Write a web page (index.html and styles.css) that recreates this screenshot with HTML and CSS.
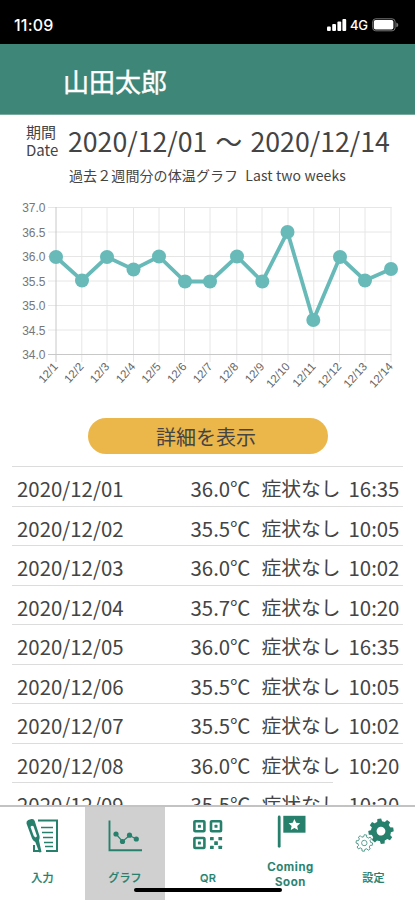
FILE: index.html
```html
<!DOCTYPE html>
<html lang="ja">
<head>
<meta charset="utf-8">
<meta name="viewport" content="width=device-width, initial-scale=1">
<title>体温グラフ</title>
<link rel="stylesheet" href="styles.css">
</head>
<body>
<div class="app">
  <div class="status">
    <span class="clock">11:09</span>
    <div class="signals">
      <svg class="bars" width="20" height="14" viewBox="0 0 20 14" fill="#fff"><rect x="0" y="8.5" width="3.8" height="4.5" rx="1"/><rect x="5.2" y="6" width="3.8" height="7" rx="1"/><rect x="10.4" y="3.5" width="3.8" height="9.5" rx="1"/><rect x="15.4" y="1" width="3.8" height="12" rx="1"/></svg>
      <span class="network">4G</span>
      <svg width="27" height="14" viewBox="0 0 27 14"><rect x=".7" y=".8" width="22.4" height="12" rx="3" fill="none" stroke="#777"/><rect x="1.8" y="2" width="19.6" height="9.6" rx="1.8" fill="#fff"/><path d="M24.3 4.5q2 .7 2 2.4t-2 2.4z" fill="#777"/></svg>
    </div>
  </div>
  <header class="header">山田太郎</header>
  <main class="main">
    <section class="period">
      <div class="period-label"><span>期間</span><span>Date</span></div>
      <div class="period-range">2020/12/01 ～ 2020/12/14</div>
    </section>
    <p class="caption">過去２週間分の体温グラフ&ensp;Last two weeks</p>
    <svg class="chart" width="415" height="206" viewBox="0 194 415 206">
      <path class="grid" d="M48 207.5H391.5M48 232H391.5M48 256.5H391.5M48 281H391.5M48 305.5H391.5M48 330H391.5M81.8 207V362M107 207V362M133.5 207V362M159 207V362M184.5 207V362M210 207V362M236.8 207V362M262 207V362M288 207V362M313.8 207V362M339.5 207V362M365 207V362M391 207V362"/>
      <path class="axis" d="M56 207V362M48 354.5H391.5"/>
      <g class="y-labels"><text x="45.5" y="212">37.0</text><text x="45.5" y="236.5">36.5</text><text x="45.5" y="261">36.0</text><text x="45.5" y="285.5">35.5</text><text x="45.5" y="310">35.0</text><text x="45.5" y="334.5">34.5</text><text x="45.5" y="359">34.0</text></g>
      <polyline class="series" points="56,257 82,280.5 107,257 133.5,269.5 159,256.5 185,281.5 210,281.5 237,256.5 262.3,281.5 287.5,232 313.3,320 340,257 365,280.5 391,269"/>
      <g class="points"><circle cx="56" cy="257" r="7"/><circle cx="82" cy="280.5" r="7"/><circle cx="107" cy="257" r="7"/><circle cx="133.5" cy="269.5" r="7"/><circle cx="159" cy="256.5" r="7"/><circle cx="185" cy="281.5" r="7"/><circle cx="210" cy="281.5" r="7"/><circle cx="237" cy="256.5" r="7"/><circle cx="262.3" cy="281.5" r="7"/><circle cx="287.5" cy="232" r="7"/><circle cx="313.3" cy="320" r="7"/><circle cx="340" cy="257" r="7"/><circle cx="365" cy="280.5" r="7"/><circle cx="391" cy="269" r="7"/></g>
      <g class="x-labels">
        <text transform="translate(58.5 367)rotate(-48)">12/1</text><text transform="translate(84.3 367)rotate(-48)">12/2</text><text transform="translate(110 367)rotate(-48)">12/3</text><text transform="translate(136 367)rotate(-48)">12/4</text><text transform="translate(161.5 367)rotate(-48)">12/5</text><text transform="translate(187.2 367)rotate(-48)">12/6</text><text transform="translate(213 367)rotate(-48)">12/7</text><text transform="translate(239 367)rotate(-48)">12/8</text><text transform="translate(265 367)rotate(-48)">12/9</text><text transform="translate(290.5 367)rotate(-48)">12/10</text><text transform="translate(316.3 367)rotate(-48)">12/11</text><text transform="translate(342 367)rotate(-48)">12/12</text><text transform="translate(367.8 367)rotate(-48)">12/13</text><text transform="translate(393.5 367)rotate(-48)">12/14</text>
      </g>
    </svg>
    <button class="details">詳細を表示</button>
    <div class="records">
      <div class="row"><span>2020/12/01</span><span>36.0℃</span><span class="symptom">症状なし</span><span>16:35</span></div>
      <div class="row"><span>2020/12/02</span><span>35.5℃</span><span class="symptom">症状なし</span><span>10:05</span></div>
      <div class="row"><span>2020/12/03</span><span>36.0℃</span><span class="symptom">症状なし</span><span>10:02</span></div>
      <div class="row"><span>2020/12/04</span><span>35.7℃</span><span class="symptom">症状なし</span><span>10:20</span></div>
      <div class="row"><span>2020/12/05</span><span>36.0℃</span><span class="symptom">症状なし</span><span>16:35</span></div>
      <div class="row"><span>2020/12/06</span><span>35.5℃</span><span class="symptom">症状なし</span><span>10:05</span></div>
      <div class="row"><span>2020/12/07</span><span>35.5℃</span><span class="symptom">症状なし</span><span>10:02</span></div>
      <div class="row"><span>2020/12/08</span><span>36.0℃</span><span class="symptom">症状なし</span><span>10:20</span></div>
      <div class="row row-last"><span>2020/12/09</span><span>35.5℃</span><span class="symptom">症状なし</span><span>10:20</span></div>
    </div>
  </main>
  <nav class="tabs">
    <div class="tab">
      <svg width="34" height="36" viewBox="0 0 34 36"><path d="M12 2.5H31V33H20M8 27V33H13" fill="none" stroke="#26806c" stroke-width="2"/><path d="M15 9.5H27M16 14.5H27M17 19.5H27M18 24.5H27M19 28.5H27" stroke="#26806c" stroke-width="1.7"/><path d="M.5 5.5Q0 3 2.2 2L5.5 1Q8 .6 8.7 3L13.5 18Q14 20 13 22.5L15.5 34L13.3 34.5L9.3 24Q7 22.5 6 20.5Z" fill="#26806c"/><path d="M4.5 9Q5.5 7 7.5 8.2L11 18.2L9.5 19.5L7.8 18Z" fill="#fff"/></svg>
      <span class="tab-label">入力</span>
    </div>
    <div class="tab tab-active">
      <svg width="34" height="36" viewBox="0 0 34 36"><path d="M1.5 2.5V32.2H34" fill="none" stroke="#26806c" stroke-width="1.9"/><path d="M8 16L14.5 23.5L21.5 17.5L28.3 21" fill="none" stroke="#26806c" stroke-width="1.2"/><g fill="#26806c"><circle cx="8" cy="16" r="2.6"/><circle cx="14.5" cy="23.5" r="2.6"/><circle cx="21.5" cy="17.2" r="2.6"/><circle cx="28.3" cy="21" r="2.6"/></g></svg>
      <span class="tab-label">グラフ</span>
    </div>
    <div class="tab tab-qr">
      <svg width="34" height="36" viewBox="0 0 34 36"><g fill="none" stroke="#26806c" stroke-width="2.6"><rect x="3.4" y="3.3" width="10" height="10" rx=".8"/><rect x="20" y="3.3" width="10" height="10" rx=".8"/><rect x="3.4" y="20" width="10" height="10" rx=".8"/></g><g fill="#26806c"><rect x="6.9" y="6.8" width="3" height="3" rx=".6"/><rect x="23.5" y="6.8" width="3" height="3" rx=".6"/><rect x="6.9" y="23.5" width="3" height="3" rx=".6"/><rect x="19" y="19" width="3.7" height="3.3" rx=".5"/><rect x="27.4" y="19" width="3.7" height="3.3" rx=".5"/><rect x="23.2" y="23.2" width="3.7" height="3.7" rx=".5"/><rect x="19" y="27.7" width="3.7" height="3.3" rx=".5"/><rect x="27.4" y="27.7" width="3.7" height="3.3" rx=".5"/></g></svg>
      <span class="tab-label">QR</span>
    </div>
    <div class="tab tab-soon">
      <svg width="34" height="36" viewBox="0 0 34 36"><path d="M5.2 2V31.3" stroke="#26806c" stroke-width="2.8" stroke-linecap="round"/><path d="M9.3 .8H31.5V17.7H9.3Z" fill="#26806c"/><path d="M20.4 4L22.1 7.7L26.2 8.2L23.2 11L24 15L20.4 13L16.8 15L17.6 11L14.6 8.2L18.7 7.7Z" fill="#fff"/></svg>
      <span class="tab-label">Coming<br>Soon</span>
    </div>
    <div class="tab">
      <svg class="gears" width="40" height="36" viewBox="0 0 40 36"><g transform="translate(27 13.2) rotate(-8)"><circle r="7.2" fill="none" stroke="#26806c" stroke-width="5.6"/><path id="teeth" d="M-2.7-8.5L-1.9-12.6H1.9L2.7-8.5Z" fill="#26806c"/><use href="#teeth" transform="rotate(45)"/><use href="#teeth" transform="rotate(90)"/><use href="#teeth" transform="rotate(135)"/><use href="#teeth" transform="rotate(180)"/><use href="#teeth" transform="rotate(225)"/><use href="#teeth" transform="rotate(270)"/><use href="#teeth" transform="rotate(315)"/></g><g transform="translate(10.3 25) rotate(8)" fill="none" stroke="#26806c" stroke-width=".7"><circle r="2.7"/><path id="notch" d="M-2.5-5.8L-1.5-6.1L-1.2-8.2H1.2L1.5-6.1L2.5-5.8"/><use href="#notch" transform="rotate(45)"/><use href="#notch" transform="rotate(90)"/><use href="#notch" transform="rotate(135)"/><use href="#notch" transform="rotate(180)"/><use href="#notch" transform="rotate(225)"/><use href="#notch" transform="rotate(270)"/><use href="#notch" transform="rotate(315)"/></g></svg>
      <span class="tab-label">設定</span>
    </div>
    <div class="home-bar"></div>
  </nav>
</div>
</body>
</html>
```
FILE: styles.css
```css
* { box-sizing: border-box; }
body { margin: 0; background: #fff; color: #444; font-family: "Noto Sans CJK JP", sans-serif; }
.app { width: 415px; height: 900px; display: flex; flex-direction: column; overflow: hidden; }
.status { height: 44px; flex: none; background: #000; color: #fff; display: flex; justify-content: space-between; padding: 5px 16px 0 14px; align-items: center; font-family: Inter, sans-serif; }
.clock { font-size: 16px; font-weight: 500; line-height: 20px; letter-spacing: .2px; }
.signals { display: flex; align-items: center; gap: 3px; }
.network { font-size: 13px; font-weight: 500; line-height: 16px; width: 18px; letter-spacing: -.3px; margin-right: 1px; }
.header { height: 71px; flex: none; background: #3d8678; border-bottom: 1px solid #79aaa0; color: #fff; font-size: 26px; font-weight: 400; -webkit-text-stroke: .4px #fff; line-height: 74px; padding-left: 63px; }
.main { flex: 1; min-height: 0; overflow: hidden; display: flex; flex-direction: column; }
.period { display: flex; height: 51px; flex: none; padding-left: 26px; }
.period-label { width: 41px; flex: none; display: flex; flex-direction: column; font-size: 15px; line-height: 18px; padding-top: 8px; }
.period-range { font-size: 26.7px; line-height: 51px; white-space: pre; word-spacing: 2.2px; padding-left: 1px; }
.caption { margin: 0; height: 28px; flex: none; font-size: 14px; line-height: 19px; padding-left: 69px; white-space: nowrap; letter-spacing: .1px; }
.chart { flex: none; display: block; margin-bottom: 18px; }
.grid { stroke: #e6e6e6; fill: none; }
.axis { stroke: #c8c8c8; fill: none; }
.y-labels, .x-labels { font-family: "Liberation Sans", sans-serif; font-size: 12px; fill: #777; text-anchor: end; }
.x-labels { font-size: 11.5px; fill: #666; }
.series { fill: none; stroke: #68bab9; stroke-width: 3.8; }
.points { fill: #68bab9; }
.details { flex: none; width: 240px; height: 36px; margin: 0 0 12px 88px; padding: 2px 4px 0 0; border: 0; border-radius: 18px; background: #ebb64a; color: #444; font: 20px/34px "Noto Sans CJK JP", sans-serif; }
.records { margin: 0 12px; }
.row { height: 39.55px; display: grid; grid-template-columns: 173.5px 71px 87px auto; padding-left: 5px; border-top: 1px solid #dcdcdc; font-size: 20.4px; line-height: 42px; white-space: nowrap; }
.symptom { font-size: 19.8px; }
.row-last { border-top: 0; padding-top: 1px; background: linear-gradient(#dcdcdc, #dcdcdc) 0 0 / 321px 1px no-repeat; }
.tabs { position: relative; flex: none; height: 95px; display: grid; grid-template-columns: 85px 80px 84px 83px 83px; border-top: 2px solid #c3c3c3; background: #fff; color: #26806c; }
.tab { display: flex; flex-direction: column; align-items: center; padding-top: 11px; }
.tab svg { flex: none; }
.tab-active { background: #d0d0d0; }
.tab-qr { padding-left: 2px; }
.tab-label { margin-top: 15px; font: 500 11px/18px Inter, "Noto Sans CJK JP", sans-serif; -webkit-text-stroke: .2px currentColor; text-align: center; letter-spacing: .2px; }
.tab-soon { padding-top: 8px; }
.tab-soon .tab-label { margin-top: 9px; font-size: 11.5px; line-height: 14.5px; font-weight: 600; letter-spacing: .6px; }
.home-bar { position: absolute; left: 134px; bottom: 8px; width: 148px; height: 4px; border-radius: 2px; background: #000; }
```
